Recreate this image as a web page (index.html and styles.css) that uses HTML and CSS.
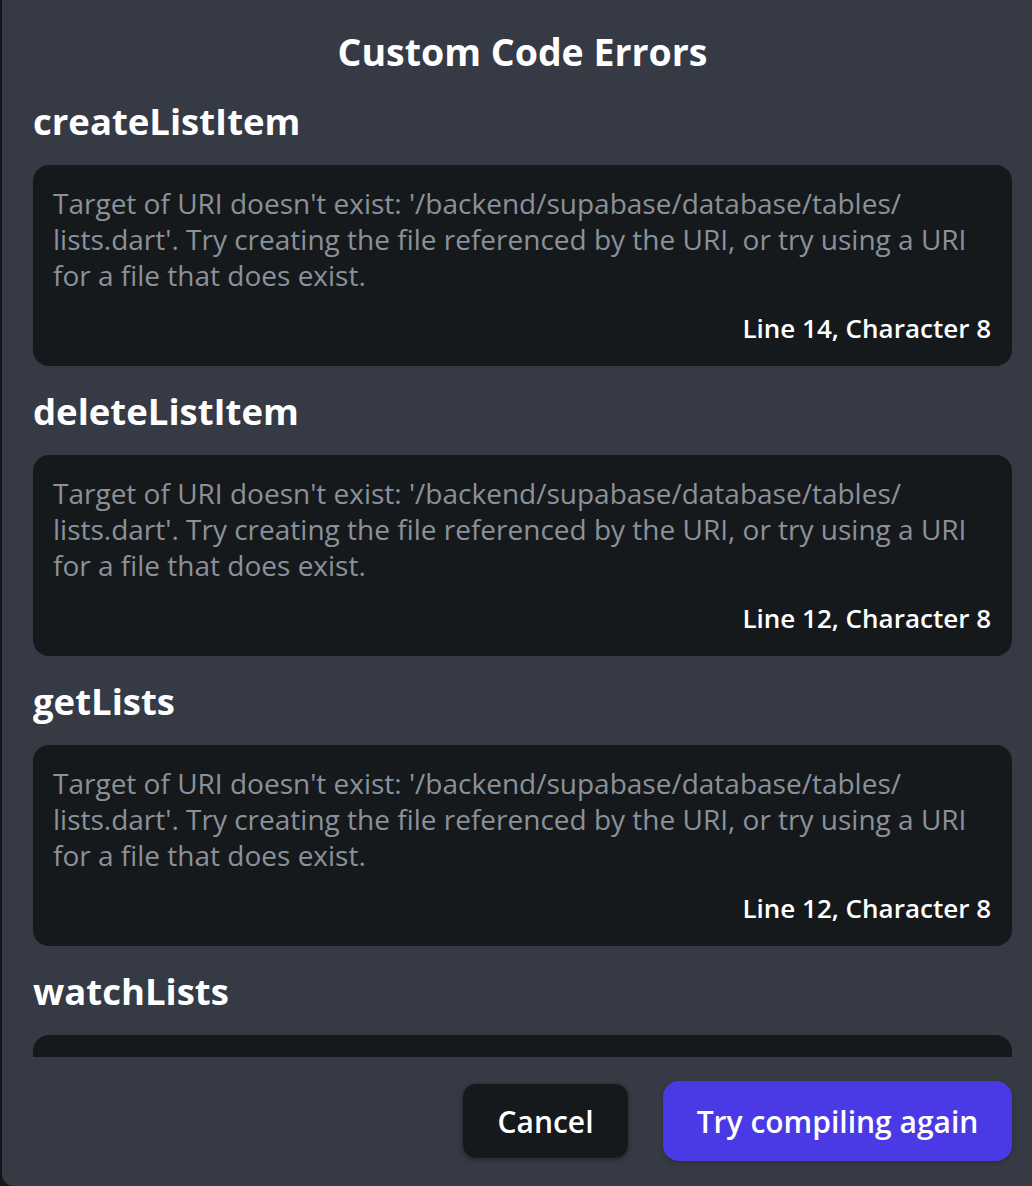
FILE: index.html
```html
<!DOCTYPE html>
<html lang="en">
<head>
<meta charset="utf-8">
<title>Custom Code Errors</title>
<link rel="stylesheet" href="styles.css">
</head>
<body>
<div class="dialog">
  <h1 class="title">Custom Code Errors</h1>
  <div class="scroll">
    <section class="error">
      <h2 class="fn">createListItem</h2>
      <div class="card">
        <p class="msg">Target of URI doesn't exist: '/backend/supabase/database/tables/<br>lists.dart'. Try creating the file referenced by the URI, or try using a URI<br>for a file that does exist.</p>
        <p class="loc">Line 14, Character 8</p>
      </div>
    </section>
    <section class="error">
      <h2 class="fn">deleteListItem</h2>
      <div class="card">
        <p class="msg">Target of URI doesn't exist: '/backend/supabase/database/tables/<br>lists.dart'. Try creating the file referenced by the URI, or try using a URI<br>for a file that does exist.</p>
        <p class="loc">Line 12, Character 8</p>
      </div>
    </section>
    <section class="error">
      <h2 class="fn">getLists</h2>
      <div class="card">
        <p class="msg">Target of URI doesn't exist: '/backend/supabase/database/tables/<br>lists.dart'. Try creating the file referenced by the URI, or try using a URI<br>for a file that does exist.</p>
        <p class="loc">Line 12, Character 8</p>
      </div>
    </section>
    <section class="error">
      <h2 class="fn">watchLists</h2>
      <div class="card">
        <p class="msg">Target of URI doesn't exist: '/backend/supabase/database/tables/<br>lists.dart'. Try creating the file referenced by the URI, or try using a URI<br>for a file that does exist.</p>
        <p class="loc">Line 12, Character 8</p>
      </div>
    </section>
  </div>
  <div class="actions">
    <button class="btn btn-cancel" type="button">Cancel</button>
    <button class="btn btn-primary" type="button">Try compiling again</button>
  </div>
</div>
</body>
</html>
```

FILE: styles.css
```css
html, body {
  margin: 0;
  padding: 0;
  height: 100%;
  overflow: hidden;
  background: #14171a;
}

body {
  font-family: "Open Sans", "Lato", sans-serif;
  color: #ffffff;
}

.dialog {
  box-sizing: border-box;
  margin-left: 2px;
  height: 1186px;
  background: #353a45;
  border-bottom-left-radius: 12px;
  padding: 28px 20px 0 31px;
  display: flex;
  flex-direction: column;
}

.title {
  margin: 0;
  font-size: 37.5px;
  line-height: 48px;
  font-weight: 700;
  text-align: center;
}

.scroll {
  height: 981px;
  flex: none;
  overflow: hidden;
}

.error {
  display: flex;
  flex-direction: column;
}

.fn {
  margin: 21px 0 20px;
  font-size: 36.5px;
  line-height: 48px;
  font-weight: 700;
}

.card {
  background: #16191c;
  border-radius: 16px;
  padding: 20px 21px 20px 20px;
}

.msg {
  margin: 0;
  font-size: 28px;
  line-height: 36px;
  color: #8b9199;
}

.loc {
  margin: 17px 0 0;
  font-size: 26px;
  line-height: 36px;
  font-weight: 600;
  text-align: right;
}

.actions {
  display: flex;
  justify-content: flex-end;
  align-items: center;
  gap: 34px;
  margin-top: 24px;
  height: 80px;
  flex: none;
}

.btn {
  font-family: inherit;
  color: #ffffff;
  font-size: 30px;
  font-weight: 600;
  border: none;
  padding: 0;
  cursor: pointer;
}

.btn-cancel {
  width: 167px;
  height: 76px;
  background: #16191c;
  border: 1px solid #2c3138;
  border-radius: 14px;
  box-shadow: 0 2px 4px rgba(0, 0, 0, 0.25);
}

.btn-primary {
  width: 349px;
  height: 80px;
  background: #4a3ae6;
  border-radius: 16px;
  box-shadow: 0 2px 4px rgba(0, 0, 0, 0.2);
}
```
